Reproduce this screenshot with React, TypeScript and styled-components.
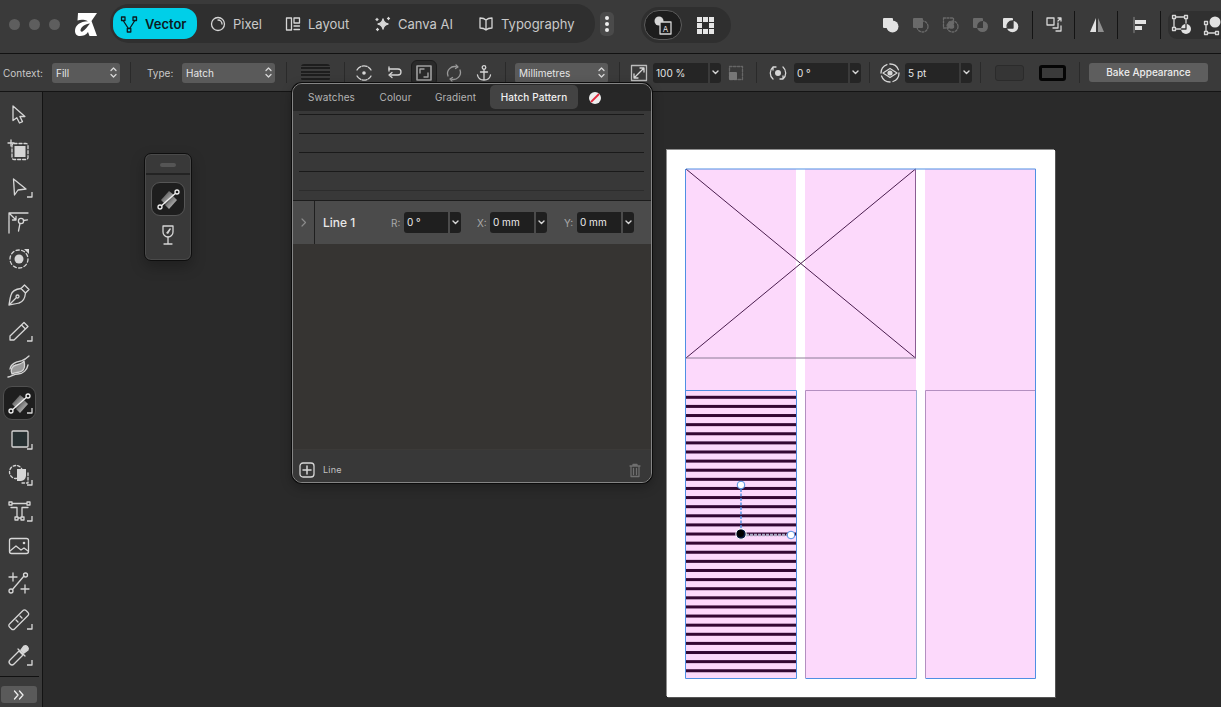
import React from "react";
import styled, { createGlobalStyle } from "styled-components";

const Global = createGlobalStyle`
  html, body { margin: 0; padding: 0; background: #2a2a2a; overflow: hidden; }
  body { font-family: Inter, "Liberation Sans", sans-serif; -webkit-font-smoothing: antialiased; }
  * { box-sizing: border-box; }
`;

const Screen = styled.div`
  position: relative; width: 1221px; height: 707px; overflow: hidden;
  display: flex; flex-direction: column; background: #2a2a2a; color: #d8d8d8;
`;

/* ---------- top bar ---------- */
const TopBar = styled.header`
  height: 54px; flex: none; display: flex; align-items: flex-start; padding-left: 9px;
  background: #3a3a3a; border-bottom: 1px solid #121212;
`;
const Lights = styled.div`display: flex; flex: none; gap: 9px; margin-top: 19px; width: 66px;`;
const Light = styled.span`width: 11px; height: 11px; border-radius: 50%; background: #5e5e5e;`;
const LogoBox = styled.div`width: 35px; flex: none; height: 26px; margin-top: 13px; svg { display: block; }`;
const PersonaPill = styled.nav`
  width: 485px; flex: none; height: 39px; margin-top: 4px; padding: 4px 3px; display: flex; align-items: center;
  background: #2f2f2f; border-radius: 19px;
`;
const Persona = styled.div<{ $active?: boolean; $w: number; $pl?: number }>`
  width: ${p => p.$w}px; height: 31px; display: flex; align-items: center; gap: 6px; flex: none;
  padding-left: ${p => p.$pl ?? (p.$active ? 6 : 10)}px; border-radius: 13px;
  background: ${p => (p.$active ? "#00cfe8" : "transparent")};
  color: ${p => (p.$active ? "#0c1a1e" : "#c9c9c9")};
  font-size: 13px; font-weight: ${p => (p.$active ? 600 : 400)};
  svg { flex: none; }
`;
const MorePill = styled.div`
  width: 14px; flex: none; height: 24px; margin: 12px 0 0 5px; background: #4a4a4a; border-radius: 5px;
  display: flex; flex-direction: column; align-items: center; justify-content: center; gap: 2px;
`;
const MoreDot = styled.span`width: 4px; height: 4px; border-radius: 50%; background: #eee;`;
const ModePill = styled.div`
  width: 90px; flex: none; height: 36px; margin: 7px 0 0 27px; padding: 3px; display: flex; align-items: center;
  background: #2f2f2f; border-radius: 18px;
`;
const ModeOn = styled.div`
  width: 38px; height: 30px; border-radius: 15px; background: #1d1d1d; border: 1px solid #5c5c5c;
  display: flex; align-items: center; justify-content: center;
`;
const ModeOff = styled.div`width: 46px; height: 30px; display: flex; align-items: center; justify-content: center;`;
const IconRow = styled.div`display: flex; flex: none; align-items: center; height: 28px; margin-top: 11px;`;
const BoolIcon = styled.div<{ $ml?: number }>`
  width: 28px; height: 28px; flex: none; margin-left: ${p => p.$ml ?? 0}px; display: flex; align-items: center; justify-content: center;
`;
const TopSep = styled.span<{ $ml: number }>`width: 1px; height: 28px; flex: none; margin-left: ${p => p.$ml}px; background: #141414;`;
const EndPill = styled.div`
  flex: 1; height: 28px; margin: 11px 0 0 7px; display: flex; align-items: center; gap: 2px; padding-left: 0;
  background: #303030; border-radius: 9px 0 0 9px;
`;

/* ---------- context bar ---------- */
const ContextBar = styled.div`
  height: 38px; flex: none; display: flex; align-items: center; background: #3a3a3a;
  border-bottom: 1px solid #141414; font-size: 10px; color: #c8c8c8;
`;
const CtxLabel = styled.span<{ $w: number; $ml?: number }>`
  width: ${p => p.$w}px; margin-left: ${p => p.$ml ?? 0}px; flex: none; white-space: nowrap;
`;
const SelectBox = styled.div<{ $w: number; $ml?: number }>`
  width: ${p => p.$w}px; height: 20px; flex: none; display: flex; align-items: center; justify-content: space-between;
  margin-left: ${p => p.$ml ?? 0}px;
  padding: 0 3px 0 4px; background: #5a5a5a; border-radius: 3px; color: #e6e6e6; font-size: 10px;
`;
const CtxSep = styled.span<{ $ml: number }>`width: 1px; height: 21px; margin-left: ${p => p.$ml}px; background: #2a2a2a; flex: none;`;
const LineSwatch = styled.div`
  width: 29px; height: 17px; margin-left: 14px; flex: none; border-radius: 3px; overflow: hidden;
  background: repeating-linear-gradient(#1d1d1d 0 2px, #3c3c3c 2px 3.4px);
`;
const CtxIcon = styled.div<{ $ml: number; $w?: number; $on?: boolean }>`
  width: ${p => p.$w ?? 26}px; height: 26px; margin-left: ${p => p.$ml}px; flex: none; display: flex; align-items: center; justify-content: center;
  border-radius: 6px; background: ${p => (p.$on ? "#2a2a2a" : "transparent")}; border: ${p => (p.$on ? "1px solid #1d1d1d" : "none")};
`;
const Combo = styled.div<{ $w?: number; $ml: number }>`
  width: ${p => p.$w ?? 67}px; height: 20px; margin-left: ${p => p.$ml}px; flex: none; display: flex; gap: 2px;
`;
const ComboField = styled.div`
  flex: 1; background: #252525; border-radius: 3px 0 0 3px; color: #e4e4e4; font-size: 10px; line-height: 20px; padding-left: 3px;
`;
const ComboArrow = styled.div`
  width: 11px; background: #252525; border-radius: 0 3px 3px 0; display: flex; align-items: center; justify-content: center;
`;
const FillSwatch = styled.div`
  width: 29px; height: 16px; margin-left: 14px; flex: none; border: 1px solid #2b2b2b; border-radius: 3px; background: #353535;
`;
const StrokeSwatch = styled.div`
  width: 27px; height: 16px; margin-left: 15px; flex: none; border: 3px solid #050505; border-radius: 3px; background: #3a3a3a;
`;
const BakeButton = styled.div`
  width: 119px; height: 19px; margin-left: 9px; flex: none; background: #5e5e5e; border-radius: 3px; color: #ececec;
  font-size: 10px; font-weight: 500; line-height: 19px; text-align: center;
`;

/* ---------- workspace ---------- */
const Main = styled.main`flex: 1; display: flex; min-height: 0;`;
const Toolbox = styled.aside`
  width: 43px; flex: none; display: flex; flex-direction: column; align-items: center;
  padding: 5px 4px 0 0; background: #3a3a3a; border-right: 1px solid #131313; position: relative;
`;
const ToolSlot = styled.div<{ $on?: boolean }>`
  width: 33px; height: 36px; flex: none; display: flex; align-items: center; justify-content: center;
  ${p => p.$on ? "background: #1e1e1e; border: 1px solid #505050; border-radius: 9px; height: 34px; margin: 1px 0;" : ""}
`;
const ToolRule = styled.div`width: 39px; height: 1px; background: #111; margin-top: 3px; align-self: flex-start;`;
const ExpandBtn = styled.div`
  width: 36px; height: 17px; margin-top: 9px; align-self: flex-start; margin-left: 1px; background: #5a5a5a; border-radius: 3px;
  display: flex; align-items: center; justify-content: center;
`;
const Canvas = styled.section`flex: 1; background: #2a2a2a; position: relative;`;

const Page = styled.div`
  position: absolute; left: 624px; top: 58px; width: 388px; height: 547px; background: #fff;
  box-shadow: -1px -1px 0 #8e8e8e, 1px 1px 0 #555;
  svg { display: block; }
`;

const ToolFlyout = styled.div`
  position: absolute; left: 144px; top: 153px; width: 48px; height: 108px; z-index: 2;
  background: #393939; border: 1px solid #0e0e0e; border-radius: 7px; box-shadow: 0 6px 14px rgba(0,0,0,.25), inset 0 0 0 1px #4a4a4a;
  display: flex; flex-direction: column; align-items: center;
`;
const Grip = styled.span`width: 16px; height: 4px; margin-top: 9px; border-radius: 2px; background: #555;`;
const FlyRule = styled.span`width: 44px; height: 2px; margin-top: 6px; background: #232323;`;
const FlyOn = styled.div`
  width: 34px; height: 34px; margin-top: 7px; border-radius: 9px; background: #1e1e1e; border: 1px solid #565656;
  display: flex; align-items: center; justify-content: center;
`;
const FlyOff = styled.div`margin-top: 2px; height: 34px; display: flex; align-items: center; justify-content: center;`;

/* ---------- hatch panel ---------- */
const Panel = styled.div`
  position: absolute; left: 292px; top: 83px; width: 360px; height: 400px; z-index: 3;
  display: flex; flex-direction: column; overflow: hidden;
  background: #363432; border: 1px solid #858585; border-radius: 10px; box-shadow: 0 0 0 1px #0c0c0c, 0 4px 12px rgba(0,0,0,.3);
`;
const TabBar = styled.div`
  height: 27px; flex: none; display: flex; align-items: center; background: #272727;
  font-size: 10px; color: #b4b4b4; letter-spacing: .1px;
`;
const Tab = styled.div<{ $w: number; $on?: boolean }>`
  width: ${p => p.$w}px; height: 24px; flex: none; text-align: center; line-height: 24px; border-radius: 5px; margin-top: -1px;
  background: ${p => (p.$on ? "#434343" : "transparent")}; color: ${p => (p.$on ? "#f0f0f0" : "#b4b4b4")}; font-weight: ${p => (p.$on ? 500 : 400)};
`;
const NoneDot = styled.div`width: 12px; height: 12px; margin-left: 11px; flex: none; svg { display: block; }`;
const Preview = styled.div`
  height: 90px; flex: none; padding: 3px 7px 0 6px; background: #383838; border-bottom: 1px solid #1c1c1c;
  display: flex; flex-direction: column; gap: 18px;
`;
const PreviewLine = styled.span<{ $faint?: boolean }>`height: 1px; flex: none; background: ${p => (p.$faint ? "#2c2c2c" : "#1a1a1a")};`;
const LineRow = styled.div`
  height: 43px; flex: none; display: flex; align-items: center; background: #4b4b4b; font-size: 10px; color: #a8a8a8;
`;
const RowChevron = styled.div`
  width: 22px; height: 100%; flex: none; display: flex; align-items: center; justify-content: center; border-right: 1px solid #1f1f1f;
`;
const RowTitle = styled.span`width: 68px; margin-left: 8px; flex: none; font-size: 12px; font-weight: 500; color: #e8e8e8;`;
const AxisLabel = styled.span<{ $ml: number }>`width: 13px; margin-left: ${p => p.$ml}px; flex: none;`;
const RowCombo = styled.div`width: 57px; height: 21px; flex: none; display: flex; gap: 2px;`;
const RowField = styled.div`
  flex: 1; background: #1f1f1f; border-radius: 3px 0 0 3px; color: #ececec; font-size: 10px; line-height: 21px; padding-left: 3px;
`;
const RowArrow = styled.div`
  width: 11px; background: #1f1f1f; border-radius: 0 3px 3px 0; display: flex; align-items: center; justify-content: center;
`;
const PanelFill = styled.div`flex: 1;`;
const PanelFoot = styled.div`
  height: 33px; flex: none; display: flex; align-items: center; padding: 7px 8px 0 6px;
  border-top: 1px solid #3c3a38; background: #383838; font-size: 9px; color: #c2c2c2;
`;
const FootLabel = styled.span`margin-left: 8px; flex: 1; letter-spacing: .2px;`;

/* ---------- icon drawing ---------- */
const Ink = styled.svg`
  display: block; flex: none; fill: none; stroke: currentColor; stroke-width: 1.3; stroke-linecap: round; stroke-linejoin: round; color: #d6d6d6;
`;
const G = ({ s = 32, w, dim, dark, children }: { s?: number; w?: number; dim?: boolean; dark?: boolean; children: React.ReactNode }) => (
  <Ink width={w ?? s} height={s} viewBox={`0 0 ${w ?? s} ${s}`} style={dark ? { color: "#0c1a1e" } : dim ? { color: "#6f6f6f" } : undefined}>{children}</Ink>
);
const Corner = () => <path d="M29 21v5h-5" strokeLinecap="butt" />;
const F = "currentColor";

const Gradient = ({ id }: { id: string }) => (
  <g>
    <defs>
      <linearGradient id={id} x1="0" y1="0" x2="1" y2="1">
        <stop offset="0" stopColor="#333" /><stop offset="1" stopColor="#e0e0e0" />
      </linearGradient>
    </defs>
    <path d="M9 17 17 8l5 4-9 9z" fill={`url(#${id})`} stroke="none" />
    <path d="M14 23l8-9 4 4-8 9z" fill={`url(#${id})`} stroke="none" transform="translate(-1 -1)" />
    <path d="M8 24 25 9" stroke="#f0f0f0" />
    <circle cx="8" cy="24" r="2" fill="#1e1e1e" stroke="#f0f0f0" />
    <circle cx="25" cy="9" r="2" fill="#1e1e1e" stroke="#f0f0f0" />
  </g>
);

const tools: { k: string; on?: boolean; art: React.ReactNode }[] = [
  { k: "move", art: <path d="M10 7v14.5l3.8-2.8 2.7 5.3 3-1.4-2.6-5.1h5z" /> },
  { k: "artboard", art: <><rect x="9" y="8.5" width="16" height="16" rx="2" strokeDasharray="3 2" /><rect x="11.5" y="11" width="11" height="11" fill={F} stroke="none" /><path d="M5 8h6M8 5v6" /></> },
  { k: "node", art: <><path d="M10.500 8 23 18l-8 1-3.500 5z" /><Corner /></> },
  { k: "corner", art: <><path d="M6 6h19M6 6v20M7 7l6 6M13 9.500v3.500H9.500" /><circle cx="18" cy="14" r="2.600" /><path d="M17 16.500 15.500 24M20.500 13.500l4-.7" /></> },
  { k: "contour", art: <><circle cx="16" cy="16" r="9" strokeDasharray="3.200 2.400" /><circle cx="16" cy="16" r="4.500" fill={F} stroke="none" /><path d="M21 6h5v5z" fill={F} stroke="none" /></> },
  { k: "pen", art: <><path d="M18 9.500 21.500 6 26 10.500 22.500 14z" /><path d="M18 9.500C13 10 9 12 8 16c-1 3-1.500 7-2 10 3-.5 7-1 10-2 4-1 6-5 6.500-10M6 26l7-7" /><circle cx="14.500" cy="17.500" r="1.500" /></> },
  { k: "pencil", art: <><path d="M7 21 21 7.500l4 4L11 25H7zM18.500 10l4 4" /><Corner /></> },
  { k: "brush", art: <><path d="M5 26c4-1 6-3 10-3 5 0 9-4 10-9M7 18c1-6 7-7 11-8 3-1 5-2 8-5" /><path d="M9 23c-2-4 0-8 4-9 4-1 6-1 8-4 1 4 1 8-2 10-3 2-7 1-10 3z" fill="#9a9a9a" /></> },
  { k: "gradient", on: true, art: <><Gradient id="gt" /><Corner /></> },
  { k: "rect", art: <><rect x="9" y="8" width="16" height="16" rx="1" fill="#263032" stroke="#d6d6d6" /><Corner /></> },
  { k: "shape", art: <><circle cx="13" cy="13" r="6.500" strokeDasharray="2.500 2" /><path d="M14 10h9v7a6 6 0 0 1-5 5h-4z" fill={F} stroke="none" /><path d="M25 14v10h-8" strokeDasharray="2.500 2" /><Corner /></> },
  { k: "text", art: <><path d="M8 8.500h17M8 12.500h6v10M25 12.500h-6v10M14 23h5" /><path d="M6 7h3v3H6zM24 7h3v3h-3zM12 22h3v3h-3zM18 22h3v3h-3z" fill="#3a3a3a" /><Corner /></> },
  { k: "image", art: <><rect x="6.500" y="7.500" width="19" height="15" rx="2" /><path d="M7 20l6-5 5 4 3-2 4 3" /><circle cx="21" cy="12" r="1.300" fill={F} stroke="none" /></> },
  { k: "vectorcrop", art: <><path d="M6 10h8M10 6v8M18 22h8M22 18v8M9.500 22.500 21 9" /><circle cx="8" cy="24" r="2" /><circle cx="22.500" cy="8" r="2" /></> },
  { k: "ruler", art: <><path d="M6.500 21 20 7.500a2 2 0 0 1 3 0l2 2a2 2 0 0 1 0 3L11.500 26a2 2 0 0 1-3 0l-2-2a2 2 0 0 1 0-3z" /><path d="M13 17l2 2M17 13l2 2" /><Corner /></> },
  { k: "picker", art: <><path d="M7 25c-1.500-1.500-1-3 0-4l9-9 4 4-9 9c-1 1-2.500 1.500-4 0z" /><path d="M15 10l7 7M18 11l3-4a3 3 0 0 1 4 4l-4 3z" fill={F} /><Corner /></> },
];

const Caret = ({ c = "#d8d8d8" }: { c?: string }) => (
  <svg width="7" height="5" viewBox="0 0 7 5" fill="none" stroke={c} strokeWidth="1.400" strokeLinecap="round" strokeLinejoin="round"><path d="M1 1l2.500 2.500L6 1" /></svg>
);
const UpDown = () => (
  <svg width="7" height="13" viewBox="0 0 7 13" fill="none" stroke="#d8d8d8" strokeWidth="1.300" strokeLinecap="round" strokeLinejoin="round"><path d="M1 4.500 3.500 2 6 4.500M1 8.500 3.500 11 6 8.500" /></svg>
);

const page = { left: 667, top: 150 };
const stripes = Array.from({ length: 31 }, (_, i) => 397.3 + i * 9.115);
const overlap = "M12 6.020V13H6.200A5.500 5.500 0 0 1 12 6.020Z";

const Artwork = () => (
  <svg width="388" height="547" viewBox={`${page.left} ${page.top} 388 547`}>
    <rect x="686" y="169" width="110" height="509" fill="#fcd9fb" />
    <rect x="805" y="169" width="111" height="509" fill="#fcd9fb" />
    <rect x="925" y="169" width="111" height="509" fill="#fcd9fb" />
    {stripes.filter(y => y < 677).map(y => <rect key={y} x="686" y={y - 1.5} width="110.500" height="3" fill="#330833" />)}
    <g fill="none" strokeWidth="1">
      <path d="M686 169 915.500 358M915.500 169 686 358" stroke="#4a1d4e" />
      <path d="M686 358H916" stroke="#8c7d96" />
      <path d="M915.500 169V358" stroke="#8a5d92" />
      <path d="M805.500 390.500H916.500V678M805.500 390.500V678M925.500 390.500H1035.500M925.500 390.500V678" stroke="#b38fc0" />
      <path d="M916.500 390.500V678" stroke="#99aed6" />
      <path d="M805.500 678.500H916.500M925.500 678.500H1035.500V169M686 169H1035.500" stroke="#4f8fe3" />
      <path d="M685.500 169V678.500H796.500V390.500H685.500" stroke="#4f8fe3" />
      <path d="M741 489V530" stroke="#4f8fe3" strokeWidth="1.400" strokeDasharray="3 1.500" />
      <path d="M746 535H787" stroke="#a8a8c0" strokeWidth="2.500" strokeDasharray="3 1" />
    </g>
    <circle cx="741" cy="485" r="3.800" fill="#fff" stroke="#4f8fe3" />
    <circle cx="741" cy="534" r="5.200" fill="#0a1a40" stroke="#fff" />
    <circle cx="740.500" cy="533.500" r="3.500" fill="#000" />
    <circle cx="791" cy="535" r="3.800" fill="#fff" stroke="#4f8fe3" />
  </svg>
);

export default function App() {
  return (
    <Screen>
      <Global />
      <TopBar>
        <Lights><Light /><Light /><Light /></Lights>
        <LogoBox>
          <svg width="22" height="23" viewBox="0 0 22 23">
            <path d="M3 0H22L16.500 8 22 23H14.500L13 19C11 22 8 23 5 23 2 23 0 21 0 18 0 12 5 8.500 13 8.200 9 6.500 6 6.500 2.500 7.500z" fill="#fff" />
            <path d="M15 10.500C10 11 6 14 5.500 17c-.2 1.500 1 2 2 1.500C10 17 13 13 15 10.500z" fill="#3a3a3a" />
          </svg>
        </LogoBox>
        <PersonaPill>
          <Persona $active $w={84}>
            <G s={20} dark>
              <rect x="2.500" y="3" width="3.500" height="3.500" /><rect x="14" y="3" width="3.500" height="3.500" /><rect x="8.300" y="14.500" width="3.500" height="3.500" />
              <path d="M4.500 7 9 14M15.500 7 11 14" />
            </G>
            Vector
          </Persona>
          <Persona $w={77} $pl={12}>
            <G s={18}><circle cx="9" cy="9" r="6.500" /><path d="M9 5a4 4 0 0 1 4 4" /></G>
            Pixel
          </Persona>
          <Persona $w={90}>
            <G s={18}><rect x="2.500" y="3" width="5" height="12" /><rect x="10" y="3" width="5.500" height="5" /><path d="M10 11h5.500M10 14.500h5.500" /></G>
            Layout
          </Persona>
          <Persona $w={103}>
            <G s={18}><path d="M9 4c.6 3 2 4.400 5 5-3 .6-4.400 2-5 5-.6-3-2-4.400-5-5 3-.6 4.400-2 5-5z" fill={F} /><path d="M3 3.500v2M2 4.500h2M14.500 2.500v2M13.500 3.500h2M3.500 13.500v2M2.500 14.500h2" /></G>
            Canva AI
          </Persona>
          <Persona $w={118}>
            <G s={18}><path d="M9 5c-1.500-1.500-4-2-6-2v10c2 0 4.500.5 6 2 1.500-1.500 4-2 6-2V3c-2 0-4.500.5-6 2zM9 5v10" /></G>
            Typography
          </Persona>
        </PersonaPill>
        <MorePill><MoreDot /><MoreDot /><MoreDot /></MorePill>
        <ModePill>
          <ModeOn>
            <G s={24}>
              <circle cx="8" cy="8" r="4.500" fill={F} stroke="none" />
              <rect x="9" y="9" width="11" height="12" fill="#1d1d1d" />
              <text x="14.500" y="18.500" fontSize="8" textAnchor="middle" fontFamily="Inter, sans-serif" fill="#e0e0e0" stroke="none">A</text>
            </G>
          </ModeOn>
          <ModeOff>
            <G s={20}>
              <g fill="#e6e6e6" stroke="none">
                {[2, 8, 14].flatMap(y => [2, 8, 14].map(x => (x === 8 && y === 8 ? null : <rect key={`${x}-${y}`} x={x} y={y} width="5" height="5" />)))}
              </g>
            </G>
          </ModeOff>
        </ModePill>
        <IconRow>
          <BoolIcon $ml={146}><G s={20}><g fill="#e2e2e2" stroke="none"><rect x="2" y="3" width="10" height="10" rx="1" /><circle cx="11.500" cy="11.500" r="6" /></g></G></BoolIcon>
          <BoolIcon $ml={2}><G s={20}><rect x="2" y="3" width="10" height="10" rx="1" fill="#6a6a6a" stroke="none" /><circle cx="11.500" cy="11.500" r="5.500" stroke="#6a6a6a" strokeDasharray="2 1.500" /></G></BoolIcon>
          <BoolIcon $ml={2}><G s={20}><rect x="2.500" y="3" width="10" height="10" stroke="#6a6a6a" strokeDasharray="2 1.500" /><circle cx="11.500" cy="11.500" r="5.500" stroke="#6a6a6a" strokeDasharray="2 1.500" /><path d={overlap} fill="#6a6a6a" stroke="none" /></G></BoolIcon>
          <BoolIcon $ml={2}><G s={20}><rect x="2" y="3" width="10" height="10" rx="1" fill="#6a6a6a" stroke="none" /><circle cx="11.500" cy="11.500" r="5.500" fill="#6a6a6a" stroke="none" /><path d={overlap} fill="#3a3a3a" stroke="none" /></G></BoolIcon>
          <BoolIcon $ml={2}><G s={20}><rect x="2" y="3" width="10" height="10" rx="1" fill="#e2e2e2" stroke="none" /><circle cx="11.500" cy="11.500" r="5.800" fill="#e2e2e2" stroke="none" /><path d={overlap} fill="#3a3a3a" stroke="#3a3a3a" /></G></BoolIcon>
          <TopSep $ml={7} />
          <BoolIcon $ml={7}><G s={20}><rect x="3" y="3" width="7" height="7" /><path d="M9 13h5V8M12 16h5v-5M14 3h3v3M17 3l-3 3" /></G></BoolIcon>
          <TopSep $ml={6} />
          <BoolIcon $ml={8}><G s={20}><path d="M9 3v14H3z" fill="#e2e2e2" stroke="none" /><path d="M11 3l6 14h-6z" fill="#8f8f8f" stroke="none" /></G></BoolIcon>
          <TopSep $ml={6} />
          <BoolIcon $ml={8}><G s={20}><path d="M4 2.500v15" stroke="#777" /><rect x="5" y="5" width="11" height="4" fill="#e2e2e2" stroke="none" /><rect x="5" y="11" width="7" height="4" fill="#e2e2e2" stroke="none" /></G></BoolIcon>
          <TopSep $ml={6} />
        </IconRow>
        <EndPill>
          <BoolIcon $ml={0}><G s={22}><rect x="3" y="3" width="12" height="12" /><path d="M1.500 1.500h3v3h-3zM13.500 1.500h3v3h-3zM1.500 13.500h3v3h-3z" fill="#303030" /><circle cx="15" cy="15" r="5" fill="#e2e2e2" stroke="none" /><path d="M10.500 15h4.500v-5" stroke="#303030" /></G></BoolIcon>
          <BoolIcon $ml={0}><G s={22}><path d="M5 9v10h11" /><path d="M3.500 7.500h3v3h-3zM3.500 17.500h3v3h-3zM14.500 17.500h3v3h-3z" fill="#303030" /><circle cx="14" cy="8" r="5.500" fill="#e2e2e2" stroke="none" /></G></BoolIcon>
        </EndPill>
      </TopBar>

      <ContextBar>
        <CtxLabel $w={49} $ml={3}>Context:</CtxLabel>
        <SelectBox $w={68}>Fill<UpDown /></SelectBox>
        <CtxSep $ml={10} />
        <CtxLabel $w={35} $ml={16}>Type:</CtxLabel>
        <SelectBox $w={93}>Hatch<UpDown /></SelectBox>
        <CtxSep $ml={11} />
        <LineSwatch />
        <CtxSep $ml={14} />
        <CtxIcon $ml={6}><G s={20}><path d="M3 7a8 8 0 0 1 14 0M3 13a8 8 0 0 0 14 0" strokeDasharray="5 1.500" /><circle cx="10" cy="10" r="1.800" fill={F} stroke="none" /></G></CtxIcon>
        <CtxIcon $ml={4}><G s={20}><path d="M5 6h9a3 3 0 0 1 0 6H7M8 9.500 5 12l3 2.500" /><path d="M5 4v4" /></G></CtxIcon>
        <CtxIcon $ml={4} $on><G s={20}><rect x="3" y="3" width="14" height="14" stroke="#a0a0a0" strokeWidth="1.600" /><path d="M6 10V6h4M14 10v4h-4" stroke="#a0a0a0" strokeWidth="1.400" /></G></CtxIcon>
        <CtxIcon $ml={4}><G s={20} dim><path d="M4 13a7 7 0 0 1 9-9M16 7a7 7 0 0 1-9 9" stroke="#9a9a9a" /><path d="M12 2l2 2-2.500 1.500M8 18l-2-2 2.500-1.500" stroke="#9a9a9a" /></G></CtxIcon>
        <CtxIcon $ml={4}><G s={20}><circle cx="10" cy="4.500" r="1.800" /><path d="M10 6.500V17M6.500 9h7M3.500 12c.5 3 3 5 6.500 5s6-2 6.500-5" /></G></CtxIcon>
        <CtxSep $ml={8} />
        <SelectBox $w={93} $ml={9}>Millimetres<UpDown /></SelectBox>
        <CtxSep $ml={11} />
        <CtxIcon $ml={7} $w={24}><G s={20}><rect x="2.500" y="2.500" width="15" height="15" stroke="#bbb" /><path d="M5 15 15 5M11 5h4v4M5 11v4h4" /></G></CtxIcon>
        <Combo $ml={2} $w={68}><ComboField>100 %</ComboField><ComboArrow><Caret /></ComboArrow></Combo>
        <CtxIcon $ml={3} $w={24}><G s={18}><rect x="2.500" y="2.500" width="13" height="13" stroke="#666" strokeDasharray="2.500 1.500" /><rect x="2" y="8" width="8" height="8" rx="1" fill="#777" stroke="none" /></G></CtxIcon>
        <CtxSep $ml={8} />
        <CtxIcon $ml={8}><G s={20}><path d="M5 4a8 8 0 0 0 0 12M15 16a8 8 0 0 0 0-12M5 4h3M5 4v3M15 16h-3M15 16v-3" /><circle cx="10" cy="10" r="3" fill={F} stroke="none" /></G></CtxIcon>
        <Combo $ml={3}><ComboField>0 °</ComboField><ComboArrow><Caret /></ComboArrow></Combo>
        <CtxSep $ml={8} />
        <CtxIcon $ml={7}><G s={22}><circle cx="11" cy="11" r="9" strokeDasharray="11 3" /><path d="M4 11l7-4.500 7 4.500-7 4.500z" /><circle cx="11" cy="11" r="2.600" fill={F} stroke="none" /></G></CtxIcon>
        <Combo $ml={2}><ComboField>5 pt</ComboField><ComboArrow><Caret /></ComboArrow></Combo>
        <CtxSep $ml={8} />
        <FillSwatch />
        <StrokeSwatch />
        <CtxSep $ml={13} />
        <BakeButton>Bake Appearance</BakeButton>
      </ContextBar>

      <Main>
        <Toolbox>
          {tools.map(t => (
            <ToolSlot key={t.k} $on={t.on}><G>{t.art}</G></ToolSlot>
          ))}
          <ToolRule />
          <ExpandBtn>
            <svg width="12" height="10" viewBox="0 0 12 10" fill="none" stroke="#eee" strokeWidth="1.300" strokeLinecap="round" strokeLinejoin="round"><path d="M1.500 1 5 5 1.500 9M6.500 1 10 5 6.500 9" /></svg>
          </ExpandBtn>
        </Toolbox>
        <Canvas>
          <Page><Artwork /></Page>
        </Canvas>
      </Main>

      <ToolFlyout>
        <Grip />
        <FlyRule />
        <FlyOn><G><Gradient id="gf" /></G></FlyOn>
        <FlyOff>
          <G s={24}>
            <path d="M7 3h10v6a5 5 0 0 1-10 0z" /><path d="M12 14v7M8 21h8" /><path d="M10 10l4-5 1 1-3 5z" fill={F} stroke="none" />
          </G>
        </FlyOff>
      </ToolFlyout>

      <Panel>
        <TabBar>
          <Tab $w={77}>Swatches</Tab>
          <Tab $w={51}>Colour</Tab>
          <Tab $w={69}>Gradient</Tab>
          <Tab $w={88} $on>Hatch Pattern</Tab>
          <NoneDot>
            <svg width="12" height="12" viewBox="0 0 12 12">
              <circle cx="6" cy="6" r="6" fill="#eee" /><path d="M2 10 10 2" stroke="#e2283c" strokeWidth="1.800" />
            </svg>
          </NoneDot>
        </TabBar>
        <Preview>
          <PreviewLine /><PreviewLine /><PreviewLine /><PreviewLine /><PreviewLine $faint />
        </Preview>
        <LineRow>
          <RowChevron>
            <svg width="6" height="9" viewBox="0 0 6 9" fill="none" stroke="#8a8a8a" strokeWidth="1.200" strokeLinecap="round" strokeLinejoin="round"><path d="M1 1l3.500 3.500L1 8" /></svg>
          </RowChevron>
          <RowTitle>Line 1</RowTitle>
          <AxisLabel $ml={0}>R:</AxisLabel>
          <RowCombo><RowField>0 °</RowField><RowArrow><Caret /></RowArrow></RowCombo>
          <AxisLabel $ml={16}>X:</AxisLabel>
          <RowCombo><RowField>0 mm</RowField><RowArrow><Caret /></RowArrow></RowCombo>
          <AxisLabel $ml={17}>Y:</AxisLabel>
          <RowCombo><RowField>0 mm</RowField><RowArrow><Caret /></RowArrow></RowCombo>
        </LineRow>
        <PanelFill />
        <PanelFoot>
          <G s={16}><rect x="1" y="1" width="14" height="14" rx="3" /><path d="M4 8h8M8 4v8" strokeWidth="1.500" /></G>
          <FootLabel>Line</FootLabel>
          <G s={16} dim><path d="M3 4h10M6 4V2.500h4V4M4 4v10.500h8V4M6.500 6.500v6M9.500 6.500v6" /></G>
        </PanelFoot>
      </Panel>
    </Screen>
  );
}
